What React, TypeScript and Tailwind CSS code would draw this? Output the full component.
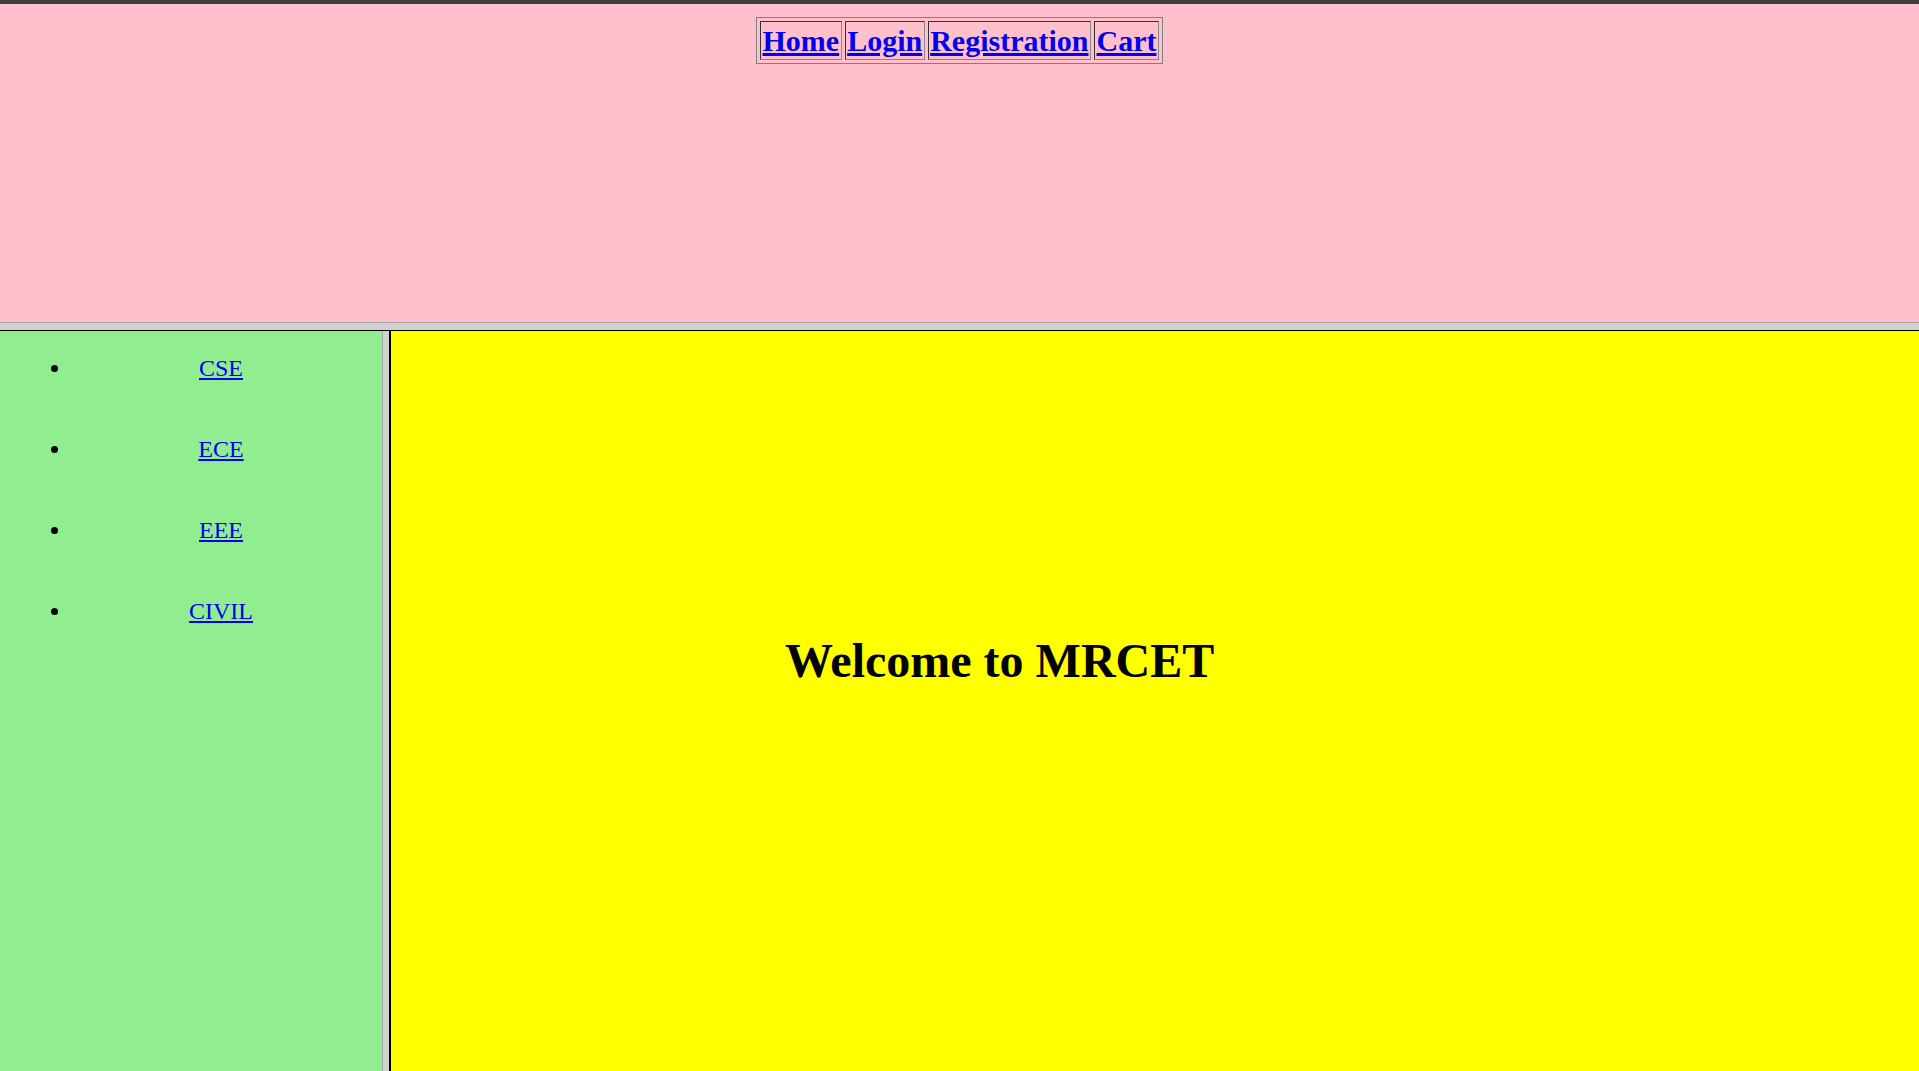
import React from "react";

const serif = { fontFamily: '"Liberation Serif", "Times New Roman", serif' };

export default function App() {
  const nav = ["Home", "Login", "Registration", "Cart"];
  const depts = ["CSE", "ECE", "EEE", "CIVIL"];
  return (
    <div className="w-[1919px] h-[1071px] overflow-hidden flex flex-col font-['Liberation_Serif',serif]" style={serif}>
      <div className="h-[4px] bg-[#3c3c3c] shrink-0" />
      <div className="h-[318px] bg-[#ffc0cb] shrink-0 flex justify-center items-start pt-[13px]">
        <div className="flex gap-[3px] p-[3px] border border-[#808080]">
          {nav.map((n) => (
            <div
              key={n}
              className="border border-t-[#333333] border-l-[#333333] border-r-[#888888] border-b-[#888888] px-[1.5px] pt-[2px] pb-[1px]"
            >
              <a href="#" className="text-[30px] leading-[34px] font-bold text-[#0000ee] underline block">
                {n}
              </a>
            </div>
          ))}
        </div>
      </div>
      <div className="h-[8px] shrink-0 border-t border-[#a8a8a8] bg-[#d0d0d0]" />
      <div className="flex-1 flex border-t border-black">
        <div className="w-[382px] bg-[#90ee90] shrink-0">
          <ul className="list-disc pl-[72px] mt-[24px] text-center">
            {depts.map((d) => (
              <li key={d} className="text-[24px] leading-[27px] mb-[54px] mr-[12px]">
                <a href="#" className="text-[#0000ee] underline">
                  {d}
                </a>
              </li>
            ))}
          </ul>
        </div>
        <div className="w-[7px] shrink-0 border-l border-[#a8a8a8] bg-[#d0d0d0]" />
        <div className="flex-1 bg-[#ffff00] border-l-2 border-black">
          <h1 className="text-[48px] leading-[55px] font-bold text-black mt-[302px] pl-[394px]">
            Welcome to MRCET
          </h1>
        </div>
      </div>
    </div>
  );
}
